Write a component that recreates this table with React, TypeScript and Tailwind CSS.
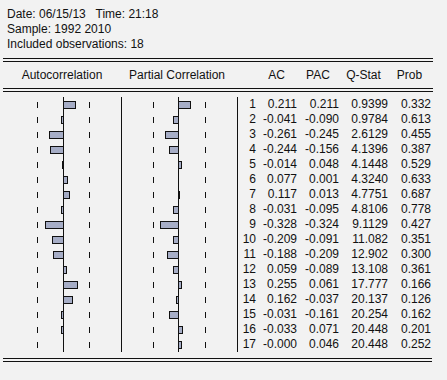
import React from 'react';

type Row = [number, string, string, string, string];

const rows: Row[] = [
  [1, '0.211', '0.211', '0.9399', '0.332'],
  [2, '-0.041', '-0.090', '0.9784', '0.613'],
  [3, '-0.261', '-0.245', '2.6129', '0.455'],
  [4, '-0.244', '-0.156', '4.1396', '0.387'],
  [5, '-0.014', '0.048', '4.1448', '0.529'],
  [6, '0.077', '0.001', '4.3240', '0.633'],
  [7, '0.117', '0.013', '4.7751', '0.687'],
  [8, '-0.031', '-0.095', '4.8106', '0.778'],
  [9, '-0.328', '-0.324', '9.1129', '0.427'],
  [10, '-0.209', '-0.091', '11.082', '0.351'],
  [11, '-0.188', '-0.209', '12.902', '0.300'],
  [12, '0.059', '-0.089', '13.108', '0.361'],
  [13, '0.255', '0.061', '17.777', '0.166'],
  [14, '0.162', '-0.037', '20.137', '0.126'],
  [15, '-0.031', '-0.161', '20.254', '0.162'],
  [16, '-0.033', '0.071', '20.448', '0.201'],
  [17, '-0.000', '0.046', '20.448', '0.252'],
];

const ROW_H = 15;
const SCALE = 55;

interface BarChartProps {
  values: number[];
  width: number;
  axis: number;
  dashes: [number, number];
}

// one correlogram column: axis, dashed bounds and bars
const BarChart: React.FC<BarChartProps> = ({ values, width, axis, dashes }) => {
  const height = values.length * ROW_H;
  return (
    <svg width={width} height={height} className="block shrink-0">
      {values.map((v, i) => {
        const top = i * ROW_H;
        const w = Math.round(Math.abs(v) * SCALE);
        return (
          <g key={i}>
            {dashes.map((d) => (
              <line
                key={d}
                x1={d + 0.5}
                x2={d + 0.5}
                y1={top + 5}
                y2={top + 11}
                stroke="#111"
                strokeWidth={1}
              />
            ))}
            {w > 0 && (
              <rect
                x={v > 0 ? axis + 0.5 : axis + 0.5 - w}
                y={top + 4.5}
                width={w}
                height={7}
                fill="#a6adc6"
                stroke="#111"
                strokeWidth={1}
              />
            )}
          </g>
        );
      })}
      <line x1={axis + 0.5} x2={axis + 0.5} y1={0} y2={height} stroke="#111" strokeWidth={1} />
    </svg>
  );
};

const DoubleRule: React.FC<{ className?: string }> = ({ className }) => (
  <div className={`h-[4px] border-y border-[#111] ${className ?? ''}`} />
);

export default function App() {
  const ac = rows.map((r) => parseFloat(r[1]));
  const pac = rows.map((r) => parseFloat(r[2]));

  return (
    <div
      className="w-[447px] h-[380px] bg-[#f2f2f2] text-[#111] text-[12px] overflow-hidden"
      style={{ fontFamily: '"Liberation Sans", Arial, sans-serif' }}
    >
      <div className="pl-[7px] pt-[7px] leading-[15px]">
        <div className="whitespace-pre">Date: 06/15/13   Time: 21:18</div>
        <div>Sample: 1992 2010</div>
        <div>Included observations: 18</div>
      </div>

      <div className="ml-[3px] w-[430px] mt-[6px]">
        <DoubleRule />

        <div className="flex h-[26px] leading-[26px]">
          <div className="w-[118px] text-center">Autocorrelation</div>
          <div className="w-[116px] pr-[4px] text-center">Partial Correlation</div>
          <div className="w-[19px]" />
          <div className="w-[41px] text-center">AC</div>
          <div className="w-[42px] text-center">PAC</div>
          <div className="w-[49px] text-center">Q-Stat</div>
          <div className="w-[43px] text-center">Prob</div>
        </div>

        <DoubleRule />

        <div className="flex pt-[5px]">
          <BarChart values={ac} width={118} axis={60} dashes={[34, 86]} />
          <div className="border-l border-[#111]">
            <BarChart values={pac} width={115} axis={56} dashes={[31, 83]} />
          </div>
          <div className="border-l border-[#111]">
            {rows.map(([lag, a, p, q, prob]) => (
              <div key={lag} className="flex h-[15px] leading-[15px] text-right">
                <div className="w-[18px]">{lag}</div>
                <div className="w-[41px]">{a}</div>
                <div className="w-[42px]">{p}</div>
                <div className="w-[49px]">{q}</div>
                <div className="w-[43px]">{prob}</div>
              </div>
            ))}
          </div>
        </div>

        <DoubleRule className="mt-[6px] w-[429px]" />
      </div>
    </div>
  );
}
